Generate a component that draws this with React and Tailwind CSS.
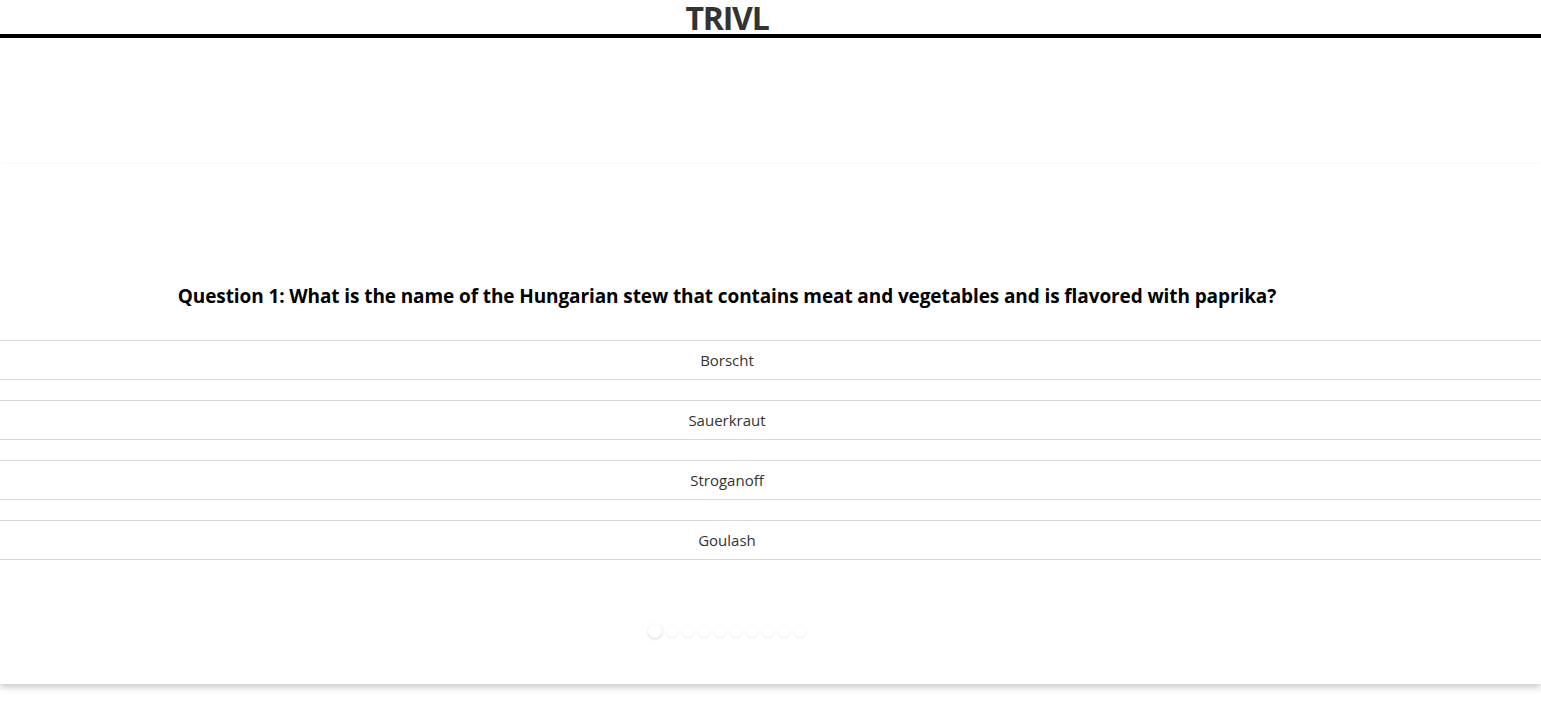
export default function App() {
  const answers = ["Borscht", "Sauerkraut", "Stroganoff", "Goulash"];
  const dots = Array.from({ length: 10 });
  return (
    <div className="min-h-screen bg-white" style={{ fontFamily: '"Open Sans", "Noto Sans", sans-serif' }}>
      <header className="border-b-4 border-black pr-[87px]">
        <h1 className="h-[34px] pt-[2px] text-center text-[32px] leading-[31px] font-bold text-[#333] tracking-[-1.2px]">TRIVL</h1>
      </header>
      <div className="mt-[126px] h-[520px] bg-white shadow-[0_4px_6px_rgba(0,0,0,0.18),0_-1px_3px_rgba(0,0,0,0.02)] pt-[118px]">
        <h2 className="pr-[87px] text-center text-[19px] leading-[28px] font-bold text-black tracking-[-0.1px]">
          Question 1: What is the name of the Hungarian stew that contains meat and vegetables and is flavored with paprika?
        </h2>
        <div className="mt-[30px] flex flex-col gap-5">
          {answers.map((a) => (
            <div key={a} className="h-10 border-y border-[#d9d9d9] flex items-center justify-center pr-[87px] text-[15px] text-[#333]">
              {a}
            </div>
          ))}
        </div>
        <div className="mt-[64px] pr-[87px] flex justify-center items-center gap-1">
          {dots.map((_, i) => (
            <span
              key={i}
              className={
                i === 0
                  ? "w-[14px] h-[14px] rounded-full bg-white shadow-[0_1px_3px_rgba(0,0,0,0.18)]"
                  : "w-3 h-3 rounded-full bg-white shadow-[0_1px_2px_rgba(0,0,0,0.1)]"
              }
            />
          ))}
        </div>
      </div>
    </div>
  );
}
